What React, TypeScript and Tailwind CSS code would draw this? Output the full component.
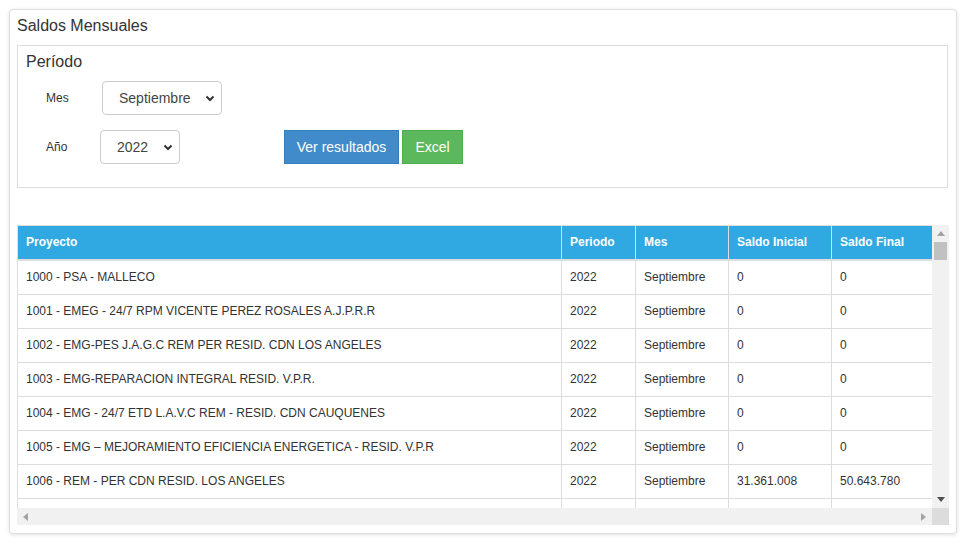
import React from "react";

interface Saldo {
  proyecto: string;
  periodo: string;
  mes: string;
  inicial: string;
  final: string;
}

const rows: Saldo[] = [
  { proyecto: "1000 - PSA - MALLECO", periodo: "2022", mes: "Septiembre", inicial: "0", final: "0" },
  { proyecto: "1001 - EMEG - 24/7 RPM VICENTE PEREZ ROSALES A.J.P.R.R", periodo: "2022", mes: "Septiembre", inicial: "0", final: "0" },
  { proyecto: "1002 - EMG-PES J.A.G.C REM PER RESID. CDN LOS ANGELES", periodo: "2022", mes: "Septiembre", inicial: "0", final: "0" },
  { proyecto: "1003 - EMG-REPARACION INTEGRAL RESID. V.P.R.", periodo: "2022", mes: "Septiembre", inicial: "0", final: "0" },
  { proyecto: "1004 - EMG - 24/7 ETD L.A.V.C REM - RESID. CDN CAUQUENES", periodo: "2022", mes: "Septiembre", inicial: "0", final: "0" },
  { proyecto: "1005 - EMG – MEJORAMIENTO EFICIENCIA ENERGETICA - RESID. V.P.R", periodo: "2022", mes: "Septiembre", inicial: "0", final: "0" },
  { proyecto: "1006 - REM - PER CDN RESID. LOS ANGELES", periodo: "2022", mes: "Septiembre", inicial: "31.361.008", final: "50.643.780" },
  // next row is scrolled out of view, only its borders show
  { proyecto: "", periodo: "", mes: "", inicial: "", final: "" },
];

function Chevron() {
  return (
    <svg width="10" height="7" viewBox="0 0 10 7" className="shrink-0">
      <path d="M1.5 1.5 L5 5 L8.5 1.5" fill="none" stroke="#333" strokeWidth="2" />
    </svg>
  );
}

function FakeSelect({ value, width }: { value: string; width: string }) {
  return (
    <div className={`${width} h-[34px] flex items-center justify-between pl-4 pr-[6px] border border-[#ccc] rounded-[4px] bg-white text-[14px] text-[#444]`}>
      <span>{value}</span>
      <Chevron />
    </div>
  );
}

export default function App() {
  return (
    <div className="pt-[9px] pl-[9px] w-[967px] h-[548px] bg-white" style={{ fontFamily: '"Liberation Sans", Arial, sans-serif' }}>
      <div className="w-[948px] border border-[#dedede] rounded-[4px] shadow-[0_1px_4px_rgba(0,0,0,0.12)] bg-white px-[7px] pt-[6px] pb-[8px] text-[#333]">
        <h2 className="text-[16px] leading-[20px] mb-[9px]">Saldos Mensuales</h2>

        <div className="w-[931px] border border-[#ddd] pl-2 pt-[6px] pb-[23px]">
          <h3 className="text-[16px] leading-[20px] mb-[9px]">Período</h3>
          <div className="flex items-center pl-5">
            <span className="w-[56px] text-[12px]">Mes</span>
            <FakeSelect value="Septiembre" width="w-[120px]" />
          </div>
          <div className="flex items-center pl-5 mt-[15px]">
            <span className="w-[54px] text-[12px]">Año</span>
            <FakeSelect value="2022" width="w-[80px]" />
            <button className="ml-[104px] w-[115px] h-[34px] bg-[#428bca] border border-[#357ebd] text-white text-[14px]">
              Ver resultados
            </button>
            <button className="ml-[3px] w-[61px] h-[34px] bg-[#5cb85c] border border-[#4cae4c] text-white text-[14px]">
              Excel
            </button>
          </div>
        </div>

        <div className="mt-[37px] w-[932px]">
          <div className="flex">
            <div className="w-[915px] h-[283px] overflow-hidden">
              <table className="table-fixed w-[915px] border-collapse text-[12px] leading-[17px]">
                <colgroup>
                  <col className="w-[544px]" />
                  <col className="w-[74px]" />
                  <col className="w-[93px]" />
                  <col className="w-[103px]" />
                  <col className="w-[101px]" />
                </colgroup>
                <thead>
                  <tr className="bg-[#30a9e3] text-white">
                    {["Proyecto", "Periodo", "Mes", "Saldo Inicial", "Saldo Final"].map((h) => (
                      <th key={h} className="text-left font-bold px-2 py-2 border border-[#ddd] border-b-2">
                        {h}
                      </th>
                    ))}
                  </tr>
                </thead>
                <tbody>
                  {rows.map((r, i) => (
                    <tr key={i} className="h-[34px]">
                      <td className="px-2 py-2 border border-[#ddd] whitespace-nowrap">{r.proyecto}</td>
                      <td className="px-2 py-2 border border-[#ddd]">{r.periodo}</td>
                      <td className="px-2 py-2 border border-[#ddd]">{r.mes}</td>
                      <td className="px-2 py-2 border border-[#ddd]">{r.inicial}</td>
                      <td className="px-2 py-2 border border-[#ddd]">{r.final}</td>
                    </tr>
                  ))}
                </tbody>
              </table>
            </div>
            <div className="w-[17px] h-[283px] bg-[#f1f1f1] flex flex-col items-center">
              <div className="h-[16px] flex items-center justify-center">
                <svg width="8" height="5" viewBox="0 0 8 5"><path d="M0 5 L4 0 L8 5 Z" fill="#a3a3a3" /></svg>
              </div>
              <div className="w-[13px] h-[18px] bg-[#c1c1c1] mt-[1px]" />
              <div className="flex-1" />
              <div className="h-[16px] flex items-center justify-center mb-[1px]">
                <svg width="8" height="5" viewBox="0 0 8 5"><path d="M0 0 L8 0 L4 5 Z" fill="#505050" /></svg>
              </div>
            </div>
          </div>
          <div className="flex h-[17px]">
            <div className="w-[915px] bg-[#f1f1f1] flex items-center justify-between px-[6px]">
              <svg width="5" height="8" viewBox="0 0 5 8"><path d="M5 0 L5 8 L0 4 Z" fill="#a3a3a3" /></svg>
              <svg width="5" height="8" viewBox="0 0 5 8"><path d="M0 0 L0 8 L5 4 Z" fill="#a3a3a3" /></svg>
            </div>
            <div className="w-[17px] bg-[#dcdcdc]" />
          </div>
        </div>
      </div>
    </div>
  );
}
